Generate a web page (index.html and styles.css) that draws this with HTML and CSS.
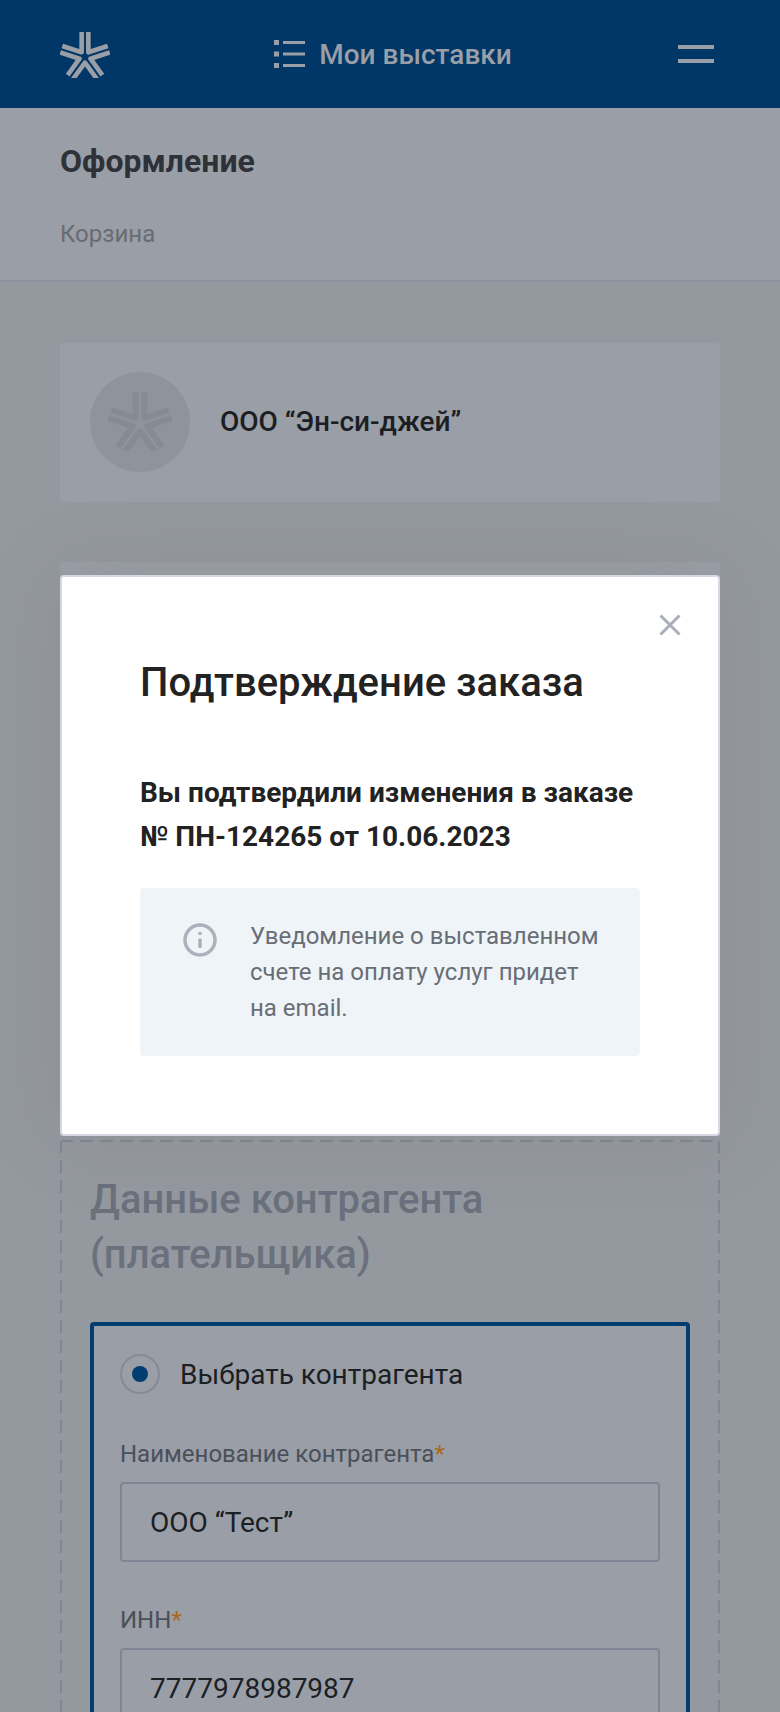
FILE: index.html
```html
<!DOCTYPE html>
<html lang="ru">
<head>
    <meta charset="UTF-8">
    <meta name="viewport" content="width=device-width, initial-scale=1.0">
    <title>Оформление</title>
    <link rel="stylesheet" href="styles.css">
</head>
<body>
    <svg class="sprite" width="0" height="0">
        <defs>
            <g id="star">
                <path id="arm" d="M-12.5 23.1L0 6L12.5 23.1"/>
                <use href="#arm" transform="rotate(72)"/>
                <use href="#arm" transform="rotate(144)"/>
                <use href="#arm" transform="rotate(216)"/>
                <use href="#arm" transform="rotate(288)"/>
            </g>
        </defs>
    </svg>

    <header class="topbar">
        <svg class="logo" viewBox="-26 -26 52 48">
            <use href="#star"/>
        </svg>
        <a class="nav-link">
            <svg class="nav-icon" viewBox="0 0 31 28">
                <rect x="0" y="0" width="5" height="5"/>
                <rect x="9" y="1" width="22" height="3"/>
                <rect x="0" y="11.5" width="5" height="5"/>
                <rect x="9" y="12.5" width="22" height="3"/>
                <rect x="0" y="23" width="5" height="5"/>
                <rect x="9" y="24" width="22" height="3"/>
            </svg>
            Мои выставки
        </a>
        <div class="burger"><span></span><span></span></div>
    </header>

    <section class="page-head">
        <h1>Оформление</h1>
        <div class="crumb">Корзина</div>
    </section>

    <main class="content">
        <div class="company">
            <div class="avatar">
                <svg viewBox="-26 -26 52 48">
                    <use href="#star"/>
                </svg>
            </div>
            <div class="company-name">ООО “Эн-си-джей”</div>
        </div>

        <div class="placeholder"></div>

        <div class="payer">
            <h2>Данные контрагента (плательщика)</h2>
            <div class="payer-card">
                <div class="radio-row">
                    <span class="radio"></span>
                    Выбрать контрагента
                </div>
                <div class="field">
                    <label>Наименование контрагента<b>*</b></label>
                    <div class="input">ООО “Тест”</div>
                </div>
                <div class="field">
                    <label>ИНН<b>*</b></label>
                    <div class="input">7777978987987</div>
                </div>
            </div>
        </div>
    </main>

    <div class="modal">
        <svg class="close" viewBox="0 0 22 22">
            <path d="M1.5 1.5L20.5 20.5M20.5 1.5L1.5 20.5"/>
        </svg>
        <h3>Подтверждение заказа</h3>
        <p class="modal-text">Вы подтвердили изменения в заказе<br>№ ПН-124265 от 10.06.2023</p>
        <div class="notice">
            <svg class="notice-icon" viewBox="0 0 34 34">
                <circle cx="17" cy="17" r="15"/>
                <path d="M17 15.5V25"/>
                <circle class="dot" cx="17" cy="10.5" r="1.8"/>
            </svg>
            <div>Уведомление о выставленном счете на оплату услуг придет на email.</div>
        </div>
    </div>
</body>
</html>
```

FILE: styles.css
```css
* {
    box-sizing: border-box;
}

html, body {
    height: 1712px;
}

body {
    margin: 0;
    position: relative;
    overflow: hidden;
    background-color: #94989f;
    font-family: 'Roboto', 'Liberation Sans', sans-serif;
    color: #1b1f24;
}

.sprite {
    position: absolute;
}

.topbar {
    height: 108px;
    background-color: #003767;
    display: flex;
    align-items: center;
    justify-content: space-between;
    padding: 0 66px 0 60px;
    color: #9a9ea6;
}

.logo {
    width: 50px;
    height: 46px;
    margin-top: 2px;
    fill: none;
    stroke: #9a9ea6;
    stroke-width: 4.8;
    stroke-linejoin: round;
}

.nav-link {
    display: flex;
    align-items: center;
    gap: 14px;
    margin-right: 2px;
    font-size: 28px;
    font-weight: 500;
}

.nav-icon {
    width: 31px;
    height: 28px;
    fill: #9a9ea6;
}

.burger {
    width: 36px;
}

.burger span {
    display: block;
    height: 4px;
    background-color: #9a9ea6;
    margin: 10px 0;
}

.page-head {
    background-color: #9a9ea6;
    padding: 35px 60px 0;
    height: 174px;
    border-bottom: 2px solid #8b909c;
}

h1 {
    margin: 0;
    font-size: 32px;
    line-height: 36px;
    font-weight: 700;
    color: #2e3238;
}

.crumb {
    margin-top: 40px;
    font-size: 24px;
    line-height: 30px;
    color: #686c72;
}

.content {
    padding: 61px 60px 0;
}

.company {
    height: 159px;
    background-color: #9a9ea6;
    border-radius: 4px;
    padding: 0 30px 2px;
    display: flex;
    align-items: center;
    gap: 30px;
}

.avatar {
    width: 100px;
    height: 100px;
    border-radius: 50%;
    background-color: #8f949c;
    display: flex;
    align-items: center;
    justify-content: center;
}

.avatar svg {
    width: 64px;
    height: 59px;
    fill: none;
    stroke: #868b93;
    stroke-width: 4.8;
    stroke-linejoin: round;
}

.company-name {
    font-size: 28px;
    font-weight: 500;
}

.placeholder {
    height: 558px;
    margin-top: 60px;
    background-color: #9a9ea6;
    border-radius: 4px;
}

/* long dashes, a plain dashed border draws them too short */
.payer {
    margin-top: 20px;
    border-radius: 4px;
    padding: 32px 30px;
    background-image:
        repeating-linear-gradient(90deg, #7f8592 0 13px, transparent 13px 20px),
        repeating-linear-gradient(90deg, #7f8592 0 13px, transparent 13px 20px),
        repeating-linear-gradient(180deg, #7f8592 0 13px, transparent 13px 20px),
        repeating-linear-gradient(180deg, #7f8592 0 13px, transparent 13px 20px);
    background-size: 100% 2px, 100% 2px, 2px 100%, 2px 100%;
    background-position: 0 0, 0 100%, 0 0, 100% 0;
    background-repeat: no-repeat;
}

h2 {
    margin: 0 0 40px;
    font-size: 40px;
    line-height: 55px;
    font-weight: 500;
    color: #6a717d;
}

.payer-card {
    background-color: #9a9ea6;
    border: 4px solid #003d70;
    border-radius: 4px;
    padding: 28px 26px;
}

.radio-row {
    display: flex;
    align-items: center;
    gap: 20px;
    height: 40px;
    font-size: 28px;
    margin-bottom: 44px;
}

.radio {
    width: 40px;
    height: 40px;
    border: 2px solid #858b96;
    border-radius: 50%;
    display: flex;
    align-items: center;
    justify-content: center;
}

.radio::before {
    content: "";
    width: 16px;
    height: 16px;
    border-radius: 50%;
    background-color: #003d70;
}

.field {
    margin-bottom: 42px;
}

.field label {
    display: block;
    font-size: 24px;
    line-height: 32px;
    margin-bottom: 12px;
    color: #4a505a;
}

.field label b {
    font-weight: 400;
    color: #a86a1c;
}

.input {
    height: 80px;
    border: 2px solid #7f8592;
    border-radius: 4px;
    padding: 0 28px;
    display: flex;
    align-items: center;
    font-size: 28px;
}

.modal {
    position: absolute;
    top: 575px;
    left: 60px;
    width: 660px;
    height: 561px;
    background-color: #fff;
    border: 2px solid #d5d8e4;
    border-radius: 4px;
    box-shadow: 0 0 80px rgba(110, 116, 100, 0.18);
    padding: 0 78px;
}

.close {
    position: absolute;
    top: 37px;
    right: 37px;
    width: 22px;
    height: 22px;
    fill: none;
    stroke: #a9aeb9;
    stroke-width: 3;
}

h3 {
    margin: 0;
    padding-top: 81px;
    font-size: 40px;
    line-height: 50px;
    font-weight: 500;
    color: #222;
}

.modal-text {
    margin: 63px 0 0;
    font-size: 28px;
    line-height: 44px;
    font-weight: 700;
    color: #222;
}

.notice {
    margin-top: 29px;
    height: 168px;
    background-color: #eff4f8;
    border-radius: 4px;
    padding: 30px 40px 0 43px;
    display: flex;
    gap: 33px;
    font-size: 24px;
    line-height: 36px;
    color: #686d76;
}

.notice-icon {
    flex: none;
    width: 34px;
    height: 34px;
    margin-top: 5px;
    fill: none;
    stroke: #aeb1bd;
    stroke-width: 3.5;
}

.notice-icon .dot {
    fill: #aeb1bd;
    stroke: none;
}
```
